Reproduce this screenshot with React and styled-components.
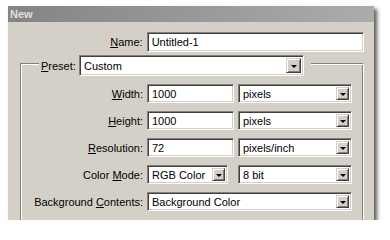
import React from "react";
import styled, { createGlobalStyle } from "styled-components";

const GlobalStyle = createGlobalStyle`
  body {
    margin: 0;
    background: #ffffff;
    font-family: "Liberation Sans", Arial, sans-serif;
    font-size: 11px;
  }
`;

const Window = styled.div`
  margin: 6px 0 0 8px;
  width: 366px;
  height: 214px;
  background: #d4d0c8;
  overflow: hidden;
  box-shadow: 3px 3px 4px rgba(0, 0, 0, 0.65);
  display: flex;
  flex-direction: column;
`;

const TitleBar = styled.div`
  height: 16px;
  background: linear-gradient(to right, #848484, #acacac);
  color: #e0e0e0;
  font-weight: bold;
  font-size: 11px;
  line-height: 16px;
  padding-left: 2px;
`;

const Body = styled.div`
  padding: 10px 10px 0 12px;
  display: flex;
  flex-direction: column;
`;

const Row = styled.div`
  display: flex;
  align-items: center;
  gap: ${(p) => p.$gap || 4}px;
`;

const Label = styled.div`
  width: ${(p) => p.$w || 121}px;
  text-align: ${(p) => p.$align || "right"};
  color: #000;
  white-space: nowrap;
  u {
    text-decoration: underline;
    text-underline-offset: 1px;
  }
`;

const Sunken = styled.div`
  box-sizing: border-box;
  width: ${(p) => p.$w}px;
  height: ${(p) => p.$h || 19}px;
  background: #fff;
  border: 1px solid;
  border-color: #808080 #ffffff #ffffff #808080;
  box-shadow: inset 1px 1px #404040, inset -1px -1px #d4d0c8;
  display: flex;
  align-items: center;
  padding: 2px 2px 2px 4px;
  color: #000;
  white-space: nowrap;
  overflow: hidden;
`;

const Value = styled.span`
  flex: 1;
`;

const ArrowButton = styled.div`
  box-sizing: border-box;
  width: ${(p) => p.$w || 13}px;
  align-self: stretch;
  background: #d4d0c8;
  border: 1px solid;
  border-color: #d4d0c8 #404040 #404040 #d4d0c8;
  box-shadow: inset 1px 1px #ffffff, inset -1px -1px #808080;
  display: flex;
  align-items: center;
  justify-content: center;

  &::after {
    content: "";
    width: 0;
    height: 0;
    border-left: 3px solid transparent;
    border-right: 3px solid transparent;
    border-top: 3px solid #000;
    margin-top: 1px;
  }
`;

const Group = styled.div`
  margin-top: 11px;
  width: 344px;
  box-sizing: border-box;
  border: 1px solid;
  border-color: #808080 #ffffff #ffffff #808080;
  box-shadow: inset 1px 1px #ffffff, inset -1px -1px #808080;
  padding: 0 0 0 1px;
  height: 200px;
  display: flex;
  flex-direction: column;
  gap: 8px;
`;

const Legend = styled.div`
  margin: -9px 0 0 17px;
  align-self: flex-start;
  background: #d4d0c8;
  padding: 0 7px 0 2px;
  display: flex;
  align-items: center;
  gap: 3px;
`;

function Select({ value, w, h, arrow }) {
  return (
    <Sunken $w={w} $h={h}>
      <Value>{value}</Value>
      <ArrowButton $w={arrow} />
    </Sunken>
  );
}

export default function App() {
  return (
    <>
      <GlobalStyle />
      <Window>
        <TitleBar>New</TitleBar>
        <Body>
          <Row>
            <Label $w={123}>
              <u>N</u>ame:
            </Label>
            <Sunken $w={218} $h={20}>
              Untitled-1
            </Sunken>
          </Row>
          <Group>
            <Legend>
              <Label $w={35} $align="left">
                <u>P</u>reset:
              </Label>
              <Select value="Custom" w={225} h={21} arrow={15} />
            </Legend>
            <Row>
              <Label>
                <u>W</u>idth:
              </Label>
              <Sunken $w={87}>1000</Sunken>
              <Select value="pixels" w={114} />
            </Row>
            <Row>
              <Label>
                <u>H</u>eight:
              </Label>
              <Sunken $w={87}>1000</Sunken>
              <Select value="pixels" w={114} />
            </Row>
            <Row>
              <Label>
                <u>R</u>esolution:
              </Label>
              <Sunken $w={87}>72</Sunken>
              <Select value="pixels/inch" w={114} />
            </Row>
            <Row>
              <Label>
                Color <u>M</u>ode:
              </Label>
              <Row $gap={10}>
                <Select value="RGB Color" w={81} />
                <Select value="8 bit" w={114} />
              </Row>
            </Row>
            <Row>
              <Label>
                Background <u>C</u>ontents:
              </Label>
              <Select value="Background Color" w={205} />
            </Row>
          </Group>
        </Body>
      </Window>
    </>
  );
}
